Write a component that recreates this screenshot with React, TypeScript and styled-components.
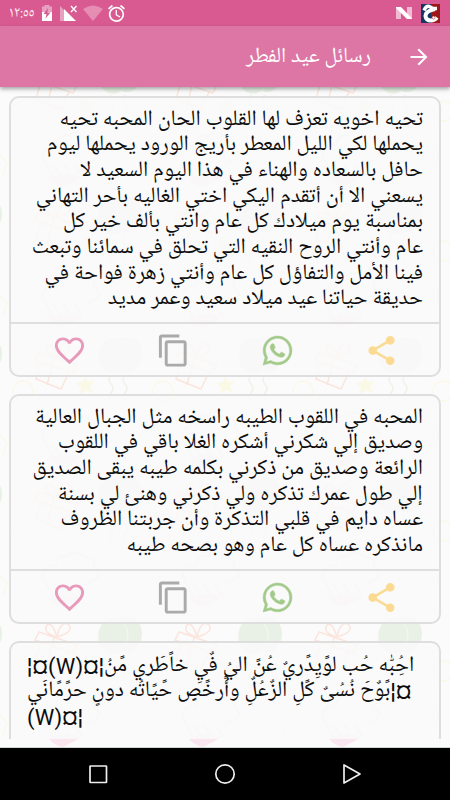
import React from "react";
import styled, { createGlobalStyle } from "styled-components";

const GlobalStyle = createGlobalStyle`
  body { margin: 0; background: #000; }
  * { box-sizing: border-box; }
  svg { display: block; flex: none; }
`;

const naskh = '"Noto Naskh Arabic UI", "Noto Naskh Arabic", "DejaVu Sans", sans-serif';

const Screen = styled.div`
  width: 450px;
  height: 800px;
  display: flex;
  flex-direction: column;
  overflow: hidden;
`;

const StatusBar = styled.header`
  height: 26px;
  flex: none;
  display: flex;
  align-items: center;
  justify-content: space-between;
  padding: 0 10px 0 9px;
  background: #d95a91;
`;

const StatusGroup = styled.div<{ $gap: number }>`
  display: flex;
  align-items: center;
  gap: ${(p) => p.$gap}px;
`;

const Clock = styled.span`
  width: 26px;
  margin-right: 1px;
  font: 400 15px/20px ${naskh};
  white-space: nowrap;
  color: #fdeaf2;
`;

const AppBar = styled.div`
  height: 61px;
  flex: none;
  display: flex;
  direction: rtl;
  align-items: center;
  padding: 0 19px;
  gap: 36px;
  background: #dd76a4;
  box-shadow: 0 2px 4px rgba(0, 0, 0, 0.35);
  position: relative;
  z-index: 2;
`;

const Title = styled.h1`
  margin: 0;
  font: 400 21.5px/30px ${naskh};
  white-space: nowrap;
  color: #fff;
`;

const Content = styled.main`
  position: relative;
  height: 661px;
  flex: none;
  background: #fbfbfb;
  border-bottom: 1px solid #cfd6cf;
`;

const Backdrop = styled.svg`
  position: absolute;
  inset: 0;
`;

const List = styled.div`
  position: relative;
  height: 652px;
  padding: 9px 9px 0 9px;
  display: flex;
  flex-direction: column;
  gap: 17px;
  overflow: hidden;
`;

const Card = styled.article`
  flex: none;
  border: 2px solid #dedede;
  border-radius: 10px;
  background: rgba(249, 249, 249, 0.86);
`;

const Message = styled.div<{ $ltr?: boolean }>`
  direction: ${(p) => (p.$ltr ? "ltr" : "rtl")};
  padding: ${(p) => (p.$ltr ? "11px" : "8.5px")} 16px ${(p) => (p.$ltr ? "10.7px" : "10.2px")};
  font: 22px/25.7px ${(p) => (p.$ltr ? `Roboto, ${naskh}` : naskh)};
  word-spacing: ${(p) => (p.$ltr ? "-0.5px" : "0")};
  color: #0c0c0c;
`;

const Line = styled.div`
  white-space: nowrap;
`;

const Actions = styled.div`
  height: 52.7px;
  display: grid;
  grid-template-columns: repeat(4, 104px);
  justify-items: center;
  align-items: center;
  padding: 2px 0 0 6px;
  border-top: 2px solid #dedede;
`;

const NavBar = styled.nav`
  flex: 1;
  display: flex;
  align-items: center;
  justify-content: space-between;
  padding: 0 88px;
  background: #000;
`;

const icons = [
  {
    name: "favorite",
    color: "#e79aba",
    weight: 0,
    d: "M16.5 3c-1.74 0-3.41.81-4.5 2.09C10.91 3.81 9.24 3 7.5 3 4.42 3 2 5.42 2 8.5c0 3.78 3.4 6.86 8.55 11.54L12 21.35l1.45-1.32C18.6 15.36 22 12.28 22 8.5 22 5.42 19.58 3 16.5 3zm-4.4 15.55l-.1.1-.1-.1C7.14 14.24 4 11.39 4 8.5 4 6.5 5.5 5 7.5 5c1.54 0 3.04.99 3.57 2.36h1.87C13.46 5.99 14.96 5 16.5 5c2 0 3.5 1.5 3.5 3.5 0 2.89-3.14 5.74-7.9 10.05z",
  },
  {
    name: "copy",
    color: "#aaaaaa",
    weight: 0,
    d: "M16 1H4c-1.1 0-2 .9-2 2v14h2V3h12V1zm3 4H8c-1.1 0-2 .9-2 2v14c0 1.1.9 2 2 2h11c1.1 0 2-.9 2-2V7c0-1.1-.9-2-2-2zm0 16H8V7h11v14z",
  },
  {
    name: "whatsapp",
    color: "#a3ca8a",
    weight: 0.3,
    d: "M12.04 2C6.58 2 2.13 6.45 2.13 11.91c0 1.75.46 3.45 1.32 4.95L2.05 22l5.25-1.38c1.45.79 3.08 1.21 4.74 1.21 5.46 0 9.91-4.45 9.91-9.91 0-2.65-1.03-5.14-2.9-7.01A9.82 9.82 0 0 0 12.04 2m.01 1.67c2.2 0 4.26.86 5.82 2.42a8.23 8.23 0 0 1 2.41 5.83c0 4.54-3.7 8.23-8.24 8.23-1.48 0-2.93-.39-4.19-1.15l-.3-.17-3.12.82.83-3.04-.2-.32a8.2 8.2 0 0 1-1.26-4.38c.01-4.54 3.7-8.24 8.25-8.24M8.53 7.33c-.16 0-.43.06-.66.31-.22.25-.87.86-.87 2.07 0 1.22.89 2.39 1 2.56.14.17 1.76 2.67 4.25 3.73.59.27 1.05.42 1.41.53.59.19 1.13.16 1.56.1.48-.07 1.46-.6 1.67-1.18.21-.58.21-1.07.15-1.18-.07-.1-.23-.16-.48-.27-.25-.14-1.47-.74-1.69-.82-.23-.08-.37-.12-.56.12-.16.25-.64.81-.78.97-.15.17-.29.19-.53.07-.26-.13-1.06-.39-2-1.23-.74-.66-1.23-1.47-1.38-1.72-.12-.24-.01-.39.11-.5.11-.11.27-.29.37-.44.13-.14.17-.25.25-.41.08-.17.04-.31-.02-.43-.06-.11-.56-1.35-.77-1.84-.2-.48-.4-.42-.56-.43-.14 0-.3-.01-.47-.01z",
  },
  {
    name: "share",
    color: "#fbdb93",
    weight: 0,
    d: "M18 16.08c-.76 0-1.44.3-1.96.77L8.91 12.7c.05-.23.09-.46.09-.7s-.04-.47-.09-.7l7.05-4.11c.54.5 1.25.81 2.04.81 1.66 0 3-1.34 3-3s-1.34-3-3-3-3 1.34-3 3c0 .24.04.47.09.7L8.04 9.81C7.5 9.31 6.79 9 6 9c-1.66 0-3 1.34-3 3s1.34 3 3 3c.79 0 1.5-.31 2.04-.81l7.12 4.16c-.05.21-.08.43-.08.65 0 1.61 1.31 2.92 2.92 2.92s2.92-1.31 2.92-2.92-1.31-2.92-2.92-2.92z",
  },
];

const messages: { ltr?: boolean; lines: string[] }[] = [
  {
    lines: [
      "تحيه اخويه تعزف لها القلوب الحان المحبه تحيه",
      "يحملها لكي الليل المعطر بأريج الورود يحملها ليوم",
      "حافل بالسعاده والهناء في هذا اليوم السعيد لا",
      "يسعني الا أن أتقدم اليكي اختي الغاليه بأحر التهاني",
      "بمناسبة يوم ميلادك كل عام وانتي بألف خير كل",
      "عام وأنتي الروح النقيه التي تحلق في سمائنا وتبعث",
      "فينا الأمل والتفاؤل كل عام وأنتي زهرة فواحة في",
      "حديقة حياتنا عيد ميلاد سعيد وعمر مديد",
    ],
  },
  {
    lines: [
      "المحبه في اللقوب الطيبه راسخه مثل الجبال العالية",
      "وصديق إلي شكرني أشكره الغلا باقي في اللقوب",
      "الرائعة وصديق من ذكرني بكلمه طيبه يبقى الصديق",
      "إلي طول عمرك تذكره ولي ذكرني وهنئ لي بسنة",
      "عساه دايم في قلبي التذكرة وأن جربتنا الظروف",
      "مانذكره عساه كل عام وهو بصحه طيبه",
    ],
  },
  {
    ltr: true,
    lines: [
      "¦¤(W)¤¦احُِبّٰه حُب لوًيِدًريٌ عُنً اليُ فٌيِ خاًطَري مًنُ",
      "بًوٌحَ نُسُىٌ كًلِ الزٌعُلٌِ وأًرخًصٍِ حًيًاتُه دونٍ حرًمًانَي¦¤",
      "(W)¤¦",
    ],
  },
];

const PartyBackdrop = () => (
  <Backdrop width="450" height="660" aria-hidden="true">
    <defs>
      <pattern id="party" x="10" y="-30" width="140" height="140" patternUnits="userSpaceOnUse">
        <g fill="#e9f1e6">
          <ellipse cx="117" cy="17" rx="15" ry="18" />
          <ellipse cx="103" cy="19" rx="15" ry="18" stroke="#f5f9f3" />
        </g>
        <g fill="none" stroke="#f0f2ea" strokeWidth="1.5">
          <path d="M101 38q-4 5 0 9t0 9q-3 4 0 8M115 38q-4 5 0 9t0 9q-3 4 0 8" />
        </g>
        <g fill="none" stroke="#fbe5dc" strokeWidth="1.5">
          <path d="M29 15l38 13-4 8-38-13zM31 25l-5 17 25 10 8-17M44 21l-7 27M47 20q-15-4-10-12 5-4 10 12 4-18 12-12 5 7-12 12" />
        </g>
        <path d="M75 39l3 6 7-1-5 5 3 7-7-3-6 4 1-7-5-4 7-1z" fill="#f9f9e6" />
        <g fill="none" stroke="#fbf8e8" strokeWidth="1.3">
          <circle cx="13" cy="54" r="10" />
          <path d="M128 96l9 10-4 12M4 92q8 6 2 14" />
        </g>
        <g fill="none" stroke="#f8eef0" strokeWidth="2">
          <path d="M37 104q-8-5-2-12 5-5 11-3 0-12 12-10 8-8 16 1 12 0 10 11 9 4 2 11l-10 5M34 103l12 22M43 108l13 18M54 108l10 17M65 108l8 12" />
        </g>
        <path d="M38 121q19-7 34-1l-19 10q-8-1-15-9z" fill="#f9e6ee" />
      </pattern>
    </defs>
    <rect width="450" height="660" fill="url(#party)" />
  </Backdrop>
);

export default function App() {
  return (
    <Screen>
      <GlobalStyle />
      <StatusBar>
        <StatusGroup $gap={5}>
          <Clock>١٢:٥٥</Clock>
          <svg width="12" height="18" viewBox="0 0 12 18">
            <path d="M1 2.5h2.5V1h5v1.5H11V8H1z" fill="#e8a0c0" />
            <path d="M1 8h10v9H1z" fill="#fff" />
            <path d="M7 4L2.5 10h3L4.5 14.5 9.5 8.5h-3z" fill="#d95a91" />
          </svg>
          <svg width="20" height="18" viewBox="0 0 20 18">
            <path d="M2 2v15h4V6z" fill="#e8a0c0" />
            <path d="M6 5v12h12z" fill="#fff" />
            <path d="M13 2l5.5 6M18.5 2L13 8" stroke="#fff" strokeWidth="1.3" />
          </svg>
          <svg width="20" height="17" viewBox="0 0 20 17">
            <path d="M0 4Q10-3 20 4L10 16z" fill="#e68db3" />
          </svg>
          <svg width="17" height="17" viewBox="2 2 20 20" fill="#fff">
            <path d="M22 5.72l-4.6-3.86-1.29 1.53 4.6 3.86L22 5.72zM7.88 3.39L6.6 1.86 2 5.71l1.29 1.53 4.59-3.85zM12.5 8H11v6l4.75 2.85.75-1.23-4-2.37V8zM12 4c-4.97 0-9 4.03-9 9s4.02 9 9 9a9 9 0 1 0 0-18zm0 16c-3.87 0-7-3.13-7-7s3.13-7 7-7 7 3.13 7 7-3.13 7-7 7z" />
          </svg>
        </StatusGroup>
        <StatusGroup $gap={8}>
          <svg width="18" height="14" viewBox="0 0 18 14">
            <path d="M1 1l5 4v8H1zM12 1h5v12l-5-4z" fill="#f0bcd2" />
            <path d="M1 1h5L17 12.5V13h-5L1 2z" fill="#fff" />
          </svg>
          <svg width="19" height="19" viewBox="0 0 19 19">
            <path d="M0 0h10v19H0z" fill="#173462" />
            <path d="M10 0h9v19h-9z" fill="#9c1717" />
            <path d="M3 6.500Q5 1.500 8.500 2.500L12 4.500H16" fill="none" stroke="#fff" strokeWidth="3.400" />
            <path d="M14 5Q4.500 7 4.500 12 5 16.500 10 16.500 13.500 16.500 16 13.500" fill="none" stroke="#fff" strokeWidth="4" />
            <circle cx="12.500" cy="13.500" r="1.500" fill="#fff" stroke="#9c1717" strokeWidth="0.500" />
          </svg>
        </StatusGroup>
      </StatusBar>
      <AppBar>
        <svg width="24" height="24" viewBox="0 0 24 24" fill="#fff">
          <path d="M12 3.5l-1.500 1.500 6 6H3.500v2h13l-6 6L12 20.500l8.500-8.500z" />
        </svg>
        <Title>رسائل عيد الفطر</Title>
      </AppBar>
      <Content>
        <PartyBackdrop />
        <List>
          {messages.map((message) => (
            <Card key={message.lines[0]}>
              <Message $ltr={message.ltr}>
                {message.lines.map((line) => (
                  <Line key={line}>{line}</Line>
                ))}
              </Message>
              <Actions>
                {icons.map((icon) => (
                  <svg
                    key={icon.name}
                    width="35"
                    height="35"
                    viewBox="0 0 24 24"
                    fill={icon.color}
                    stroke={icon.color}
                    strokeWidth={icon.weight}
                  >
                    <path d={icon.d} />
                  </svg>
                ))}
              </Actions>
            </Card>
          ))}
        </List>
      </Content>
      <NavBar>
        <svg width="20" height="20" viewBox="0 0 20 20" fill="none" stroke="#eee" strokeWidth="1.7">
          <rect x="2" y="2" width="16.5" height="16.5" rx="0.5" />
        </svg>
        <svg width="22" height="22" viewBox="0 0 22 22" fill="none" stroke="#eee" strokeWidth="1.7">
          <circle cx="11" cy="11" r="9.2" />
        </svg>
        <svg width="20" height="22" viewBox="0 0 20 22" fill="none" stroke="#eee" strokeWidth="1.7" strokeLinejoin="round">
          <path d="M2 2v18l16-9z" />
        </svg>
      </NavBar>
    </Screen>
  );
}
